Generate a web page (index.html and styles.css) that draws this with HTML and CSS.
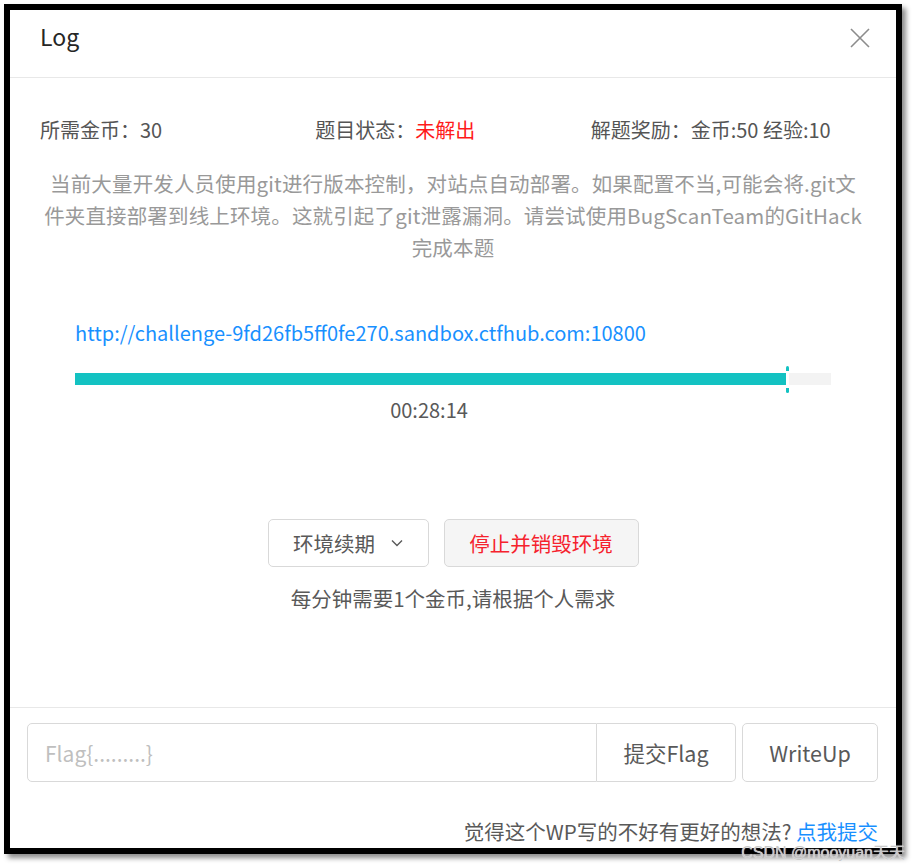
FILE: index.html
```html
<!DOCTYPE html>
<html lang="zh-CN">
<head>
<meta charset="utf-8">
<title>Log</title>
<link rel="stylesheet" href="styles.css">
</head>
<body>
<div class="frame">
  <div class="modal">
    <div class="modal-header">
      <span class="title">Log</span>
      <svg class="close" width="20" height="20" viewBox="0 0 20 20"><path d="M1 1 L19 19 M19 1 L1 19" stroke="#8c8c8c" stroke-width="1.6" fill="none"/></svg>
    </div>
    <div class="modal-body">
      <div class="info-row">
        <div>所需金币：30</div>
        <div>题目状态：<span class="red">未解出</span></div>
        <div>解题奖励：金币:50 经验:10</div>
      </div>
      <p class="desc">当前大量开发人员使用git进行版本控制，对站点自动部署。如果配置不当,可能会将.git文<br>件夹直接部署到线上环境。这就引起了git泄露漏洞。请尝试使用BugScanTeam的GitHack<br>完成本题</p>
      <div class="env">
        <a class="url">http://challenge-9fd26fb5ff0fe270.sandbox.ctfhub.com:10800</a>
        <div class="progress">
          <div class="track"><div class="fill" style="width:94%"></div></div>
          <div class="marker" style="left:94%"></div>
        </div>
        <div class="time">00:28:14</div>
      </div>
      <div class="actions">
        <button class="btn">环境续期<svg class="chev" width="12" height="8" viewBox="0 0 12 8"><path d="M1 1.5 L6 6.5 L11 1.5" stroke="#595959" stroke-width="1.4" fill="none"/></svg></button>
        <button class="btn danger">停止并销毁环境</button>
      </div>
      <div class="note">每分钟需要1个金币,请根据个人需求</div>
    </div>
    <div class="modal-footer">
      <div class="submit-row">
        <div class="input-group">
          <input class="flag-input" type="text" placeholder="Flag{.........}">
          <button class="btn addon">提交Flag</button>
        </div>
        <button class="btn wp">WriteUp</button>
      </div>
      <div class="feedback">觉得这个WP写的不好有更好的想法? <a class="link">点我提交</a></div>
    </div>
  </div>
</div>
<div class="watermark">CSDN @mooyuan天天</div>
</body>
</html>
```

FILE: styles.css
```css
* { box-sizing: border-box; }
html, body { margin: 0; padding: 0; background: #fff; }
body {
  font-family: "Noto Sans CJK SC", "Noto Sans", sans-serif;
  color: #595959;
  width: 915px;
  height: 867px;
  position: relative;
  overflow: hidden;
  text-spacing-trim: space-all;
  font-feature-settings: "chws" 0, "halt" 0;
}
.frame {
  margin: 4px 0 0 4px;
  width: 898px;
  height: 850px;
  border: 6px solid #000;
  box-shadow: 4px 4px 5px rgba(0,0,0,0.45);
  background: #fff;
}
.modal {
  display: flex;
  flex-direction: column;
  height: 100%;
}
.modal-header {
  height: 68px;
  border-bottom: 1px solid #e8e8e8;
  display: flex;
  align-items: center;
  justify-content: space-between;
  padding: 0 26px 0 30px;
  flex: none;
}
.title {
  font-size: 23px;
  color: #262626;
  margin-top: -16px;
}
.close { margin-top: -12px; }
.modal-body {
  flex: 1;
  padding: 38px 30px 0;
}
.info-row {
  display: grid;
  grid-template-columns: repeat(3, 1fr);
  font-size: 20px;
  line-height: 28px;
  color: #555;
}
.red { color: #ff1a1a; }
.desc {
  margin: 23px 0 0;
  font-size: 20.5px;
  line-height: 32px;
  color: #999;
  text-align: center;
  white-space: nowrap;
  letter-spacing: 0.15px;
}
.env {
  padding: 0 35px;
  margin-top: 55px;
}
.url {
  display: block;
  font-size: 20px;
  line-height: 30px;
  color: #1890ff;
}
.progress {
  position: relative;
  margin-top: 25px;
}
.track {
  height: 12px;
  background: #f3f3f3;
}
.fill {
  height: 100%;
  background: #13c2c2;
}
.marker {
  position: absolute;
  top: -7px;
  width: 3px;
  height: 27px;
  background: linear-gradient(#13c2c2 0 5px, #fff 5px 22px, #13c2c2 22px);
  border-radius: 2px;
}
.time {
  margin-top: 13px;
  text-align: center;
  font-size: 20px;
  line-height: 24px;
  color: #595959;
  padding-right: 48px;
}
.actions {
  display: flex;
  justify-content: center;
  gap: 15px;
  margin-top: 97px;
}
.btn {
  font-family: inherit;
  height: 48px;
  border: 1px solid #d9d9d9;
  border-radius: 5px;
  background: #fff;
  color: #595959;
  font-size: 20.5px;
  padding: 0 23px;
  display: inline-flex;
  align-items: center;
  justify-content: center;
}
.actions .btn:first-child { width: 161px; }
.chev { margin-left: 16px; }
.danger {
  background: #f5f5f5;
  color: #f5222d;
  width: 195px;
}
.note {
  margin-top: 18px;
  text-align: center;
  font-size: 20.5px;
  line-height: 26px;
  color: #595959;
}
.modal-footer {
  flex: none;
  border-top: 1px solid #e8e8e8;
  padding: 15px 12px 4px 17px;
}
.submit-row {
  display: flex;
  gap: 6px;
  height: 59px;
}
.input-group {
  display: flex;
  width: 709px;
}
.flag-input {
  flex: 1;
  height: 59px;
  border: 1px solid #d9d9d9;
  border-radius: 5px 0 0 5px;
  font-family: inherit;
  font-size: 21px;
  padding: 0 17px;
  color: #595959;
  outline: none;
}
.flag-input::placeholder { color: #bfbfbf; }
.addon {
  height: 59px;
  width: 139px;
  border-radius: 0 5px 5px 0;
  border-left: none;
  font-size: 21.5px;
  padding: 0;
}
.wp {
  height: 59px;
  width: 136px;
  font-size: 21.5px;
  padding: 0;
}
.feedback {
  margin-top: 36px;
  text-align: right;
  font-size: 20.5px;
  line-height: 26px;
  color: #595959;
  padding-right: 6px;
}
.link { color: #1890ff; }
.watermark {
  position: absolute;
  right: 10px;
  top: 839px;
  font-family: "Liberation Sans", sans-serif;
  font-size: 16px;
  color: #c9c9c9;
  text-shadow: 0 0 1px #fff;
}
```
